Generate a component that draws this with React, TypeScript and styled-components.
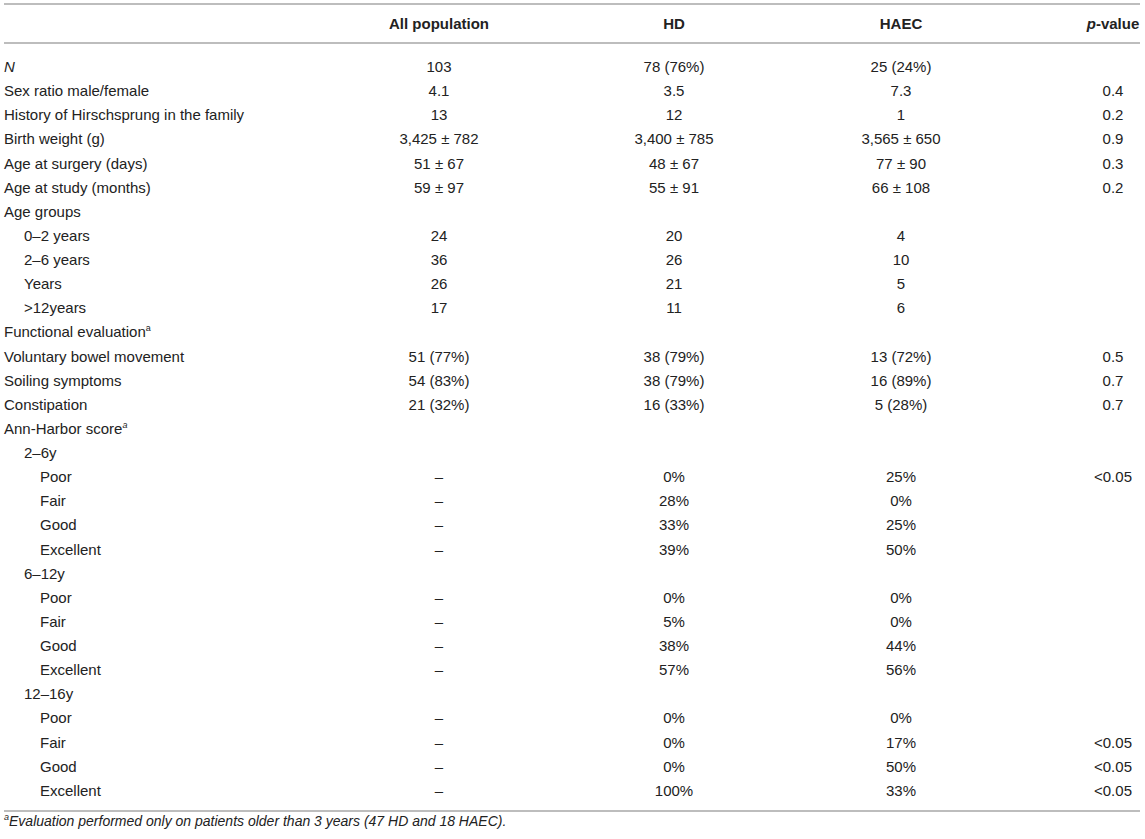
import React, { ReactElement } from "react"
import styled, { createGlobalStyle } from "styled-components"

const GlobalStyle = createGlobalStyle`
	html, body {
		margin: 0;
		padding: 0;
		background: #ffffff;
	}
	body {
		font-family: "Liberation Sans", Arial, Helvetica, sans-serif;
		color: #222222;
	}
`

const columns = "242px 386px 84px 370px 54px"
const ruleColor = "#bdbdbd"

const Page = styled.div`
	padding: 3px 5px 0 4px;
	width: 1136px;
`

const HeaderRow = styled.div`
	display: grid;
	grid-template-columns: ${columns};
	align-items: center;
	height: 37px;
	border-top: 2px solid ${ruleColor};
	border-bottom: 2px solid ${ruleColor};
	font-size: 15px;
	font-weight: 700;
`

const HeadCell = styled.div`
	text-align: center;
	white-space: nowrap;
`

const Body = styled.div`
	padding: 11px 0 7px;
	border-bottom: 2px solid ${ruleColor};
`

const Row = styled.div`
	display: grid;
	grid-template-columns: ${columns};
	align-items: center;
	height: 24.13px;
	font-size: 15px;
	line-height: 18px;
`

const Label = styled.div<{ $indent: number }>`
	padding-left: ${({ $indent }) => [0, 20, 36][$indent]}px;
	white-space: nowrap;
`

const Value = styled.div`
	text-align: center;
	white-space: nowrap;
`

const Sup = styled.sup<{ $italic?: boolean }>`
	font-size: 9px;
	line-height: 0;
	vertical-align: 6px;
	font-style: ${({ $italic }) => ($italic ? "italic" : "normal")};
`

const Footnote = styled.p`
	margin: 1px 0 0;
	font-size: 14px;
	line-height: 17px;
	font-style: italic;
`

type RowData = {
	label: React.ReactNode
	indent?: number
	values?: string[]
}

const D = "\u2013"

const rows: RowData[] = [
	{ label: <i>N</i>, values: ["103", "78 (76%)", "25 (24%)", ""] },
	{ label: "Sex ratio male/female", values: ["4.1", "3.5", "7.3", "0.4"] },
	{ label: "History of Hirschsprung in the family", values: ["13", "12", "1", "0.2"] },
	{ label: "Birth weight (g)", values: ["3,425 ± 782", "3,400 ± 785", "3,565 ± 650", "0.9"] },
	{ label: "Age at surgery (days)", values: ["51 ± 67", "48 ± 67", "77 ± 90", "0.3"] },
	{ label: "Age at study (months)", values: ["59 ± 97", "55 ± 91", "66 ± 108", "0.2"] },
	{ label: "Age groups" },
	{ label: `0${D}2 years`, indent: 1, values: ["24", "20", "4", ""] },
	{ label: `2${D}6 years`, indent: 1, values: ["36", "26", "10", ""] },
	{ label: "Years", indent: 1, values: ["26", "21", "5", ""] },
	{ label: ">12years", indent: 1, values: ["17", "11", "6", ""] },
	{ label: <>Functional evaluation<Sup>a</Sup></> },
	{ label: "Voluntary bowel movement", values: ["51 (77%)", "38 (79%)", "13 (72%)", "0.5"] },
	{ label: "Soiling symptoms", values: ["54 (83%)", "38 (79%)", "16 (89%)", "0.7"] },
	{ label: "Constipation", values: ["21 (32%)", "16 (33%)", "5 (28%)", "0.7"] },
	{ label: <>Ann-Harbor score<Sup $italic>a</Sup></> },
	{ label: `2${D}6y`, indent: 1 },
	{ label: "Poor", indent: 2, values: [D, "0%", "25%", "<0.05"] },
	{ label: "Fair", indent: 2, values: [D, "28%", "0%", ""] },
	{ label: "Good", indent: 2, values: [D, "33%", "25%", ""] },
	{ label: "Excellent", indent: 2, values: [D, "39%", "50%", ""] },
	{ label: `6${D}12y`, indent: 1 },
	{ label: "Poor", indent: 2, values: [D, "0%", "0%", ""] },
	{ label: "Fair", indent: 2, values: [D, "5%", "0%", ""] },
	{ label: "Good", indent: 2, values: [D, "38%", "44%", ""] },
	{ label: "Excellent", indent: 2, values: [D, "57%", "56%", ""] },
	{ label: `12${D}16y`, indent: 1 },
	{ label: "Poor", indent: 2, values: [D, "0%", "0%", ""] },
	{ label: "Fair", indent: 2, values: [D, "0%", "17%", "<0.05"] },
	{ label: "Good", indent: 2, values: [D, "0%", "50%", "<0.05"] },
	{ label: "Excellent", indent: 2, values: [D, "100%", "33%", "<0.05"] },
]

export default function App(): ReactElement {
	return (
		<>
			<GlobalStyle />
			<Page>
				<HeaderRow>
					<HeadCell />
					<HeadCell>All population</HeadCell>
					<HeadCell>HD</HeadCell>
					<HeadCell>HAEC</HeadCell>
					<HeadCell><i>p</i>-value</HeadCell>
				</HeaderRow>
				<Body>
					{rows.map((row, i) => (
						<Row key={i}>
							<Label $indent={row.indent ?? 0}>{row.label}</Label>
							{(row.values ?? ["", "", "", ""]).map((v, j) => (
								<Value key={j}>{v}</Value>
							))}
						</Row>
					))}
				</Body>
				<Footnote>
					<Sup $italic>a</Sup>Evaluation performed only on patients older than 3 years (47 HD and 18 HAEC).
				</Footnote>
			</Page>
		</>
	)
}
